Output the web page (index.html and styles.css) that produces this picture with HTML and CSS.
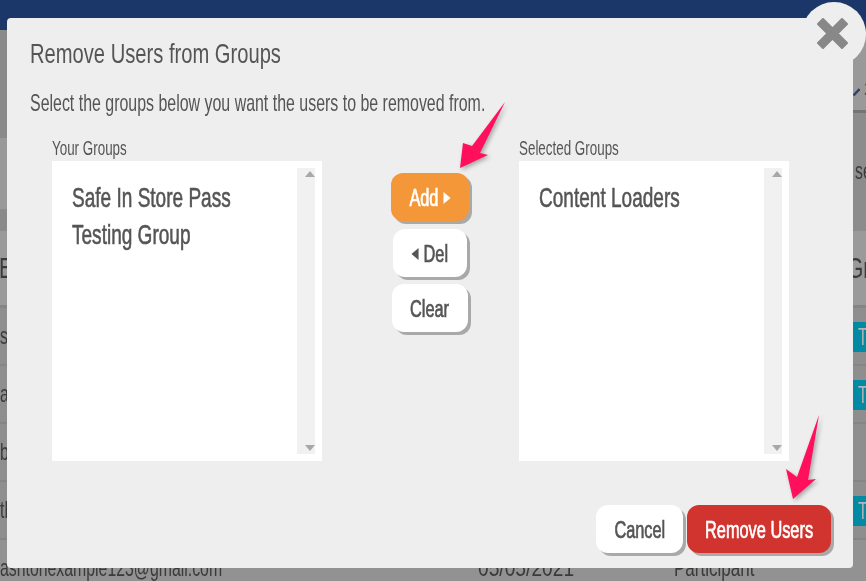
FILE: index.html
```html
<!DOCTYPE html>
<html lang="en">
<head>
<meta charset="utf-8">
<title>Remove Users from Groups</title>
<link rel="stylesheet" href="styles.css">
</head>
<body>
<div class="page">
  <div class="nav"></div>
  <div class="top">
    <div class="edge-l">
      <div class="l-a"></div>
      <div class="l-b"></div>
      <div class="l-c"></div>
    </div>
    <div class="edge-r">
      <div class="r-a">
        <svg class="pencil" width="7" height="8" viewBox="0 0 7 8"><path d="M0.5 7.5 L6.5 1" stroke="#34406a" stroke-width="2.4"/></svg>
        <span class="cond mark">2</span>
      </div>
      <div class="r-b"><span class="cond cell">se</span></div>
    </div>
  </div>
  <div class="thead"><span class="cond head head-start">E</span><span class="cond head head-end">Gr</span></div>
  <div class="row"><span class="cond cell">s</span><span class="tag"><span class="cond cell">T</span></span></div>
  <div class="row"><span class="cond cell">a</span><span class="tag"><span class="cond cell">T</span></span></div>
  <div class="row"><span class="cond cell">b</span></div>
  <div class="row"><span class="cond cell">th</span><span class="tag"><span class="cond cell">T</span></span></div>
  <div class="last"><span class="cond cell">ashtonexample123@gmail.com</span><span class="cond cell date">05/05/2021</span><span class="cond cell role">Participant</span></div>
</div>

<div class="modal">
  <h1 class="title"><span class="cond t-title">Remove Users from Groups</span></h1>
  <p class="lead"><span class="cond t-lead">Select the groups below you want the users to be removed from.</span></p>
  <div class="picker">
    <div class="col">
      <div class="col-label"><span class="cond t-label">Your Groups</span></div>
      <div class="listbox">
        <ul class="items">
          <li><span class="cond t-item">Safe In Store Pass</span></li>
          <li><span class="cond t-item">Testing Group</span></li>
        </ul>
        <div class="scroll"><i class="up"></i><i class="down"></i></div>
      </div>
    </div>
    <div class="mid">
      <button class="btn orange wide-add"><span class="t-btn">Add<i class="tri-r"></i></span></button>
      <button class="btn white wide-del"><span class="t-btn"><i class="tri-l"></i>Del</span></button>
      <button class="btn white wide-clear"><span class="t-btn">Clear</span></button>
    </div>
    <div class="col">
      <div class="col-label"><span class="cond t-label">Selected Groups</span></div>
      <div class="listbox">
        <ul class="items">
          <li><span class="cond t-item">Content Loaders</span></li>
        </ul>
        <div class="scroll"><i class="up"></i><i class="down"></i></div>
      </div>
    </div>
  </div>
  <div class="actions">
    <button class="btn white cancel"><span class="t-btn">Cancel</span></button>
    <button class="btn red remove"><span class="t-btn">Remove Users</span></button>
  </div>
</div>

<div class="close">
  <svg width="31" height="31" viewBox="0 0 31 31"><polygon points="6,1 15.5,10.5 25,1 30,6 20.5,15.5 30,25 25,30 15.5,20.5 6,30 1,25 10.5,15.5 1,6" fill="#888" stroke="#888" stroke-width="2" stroke-linejoin="round"/></svg>
</div>

<svg class="arrows" width="866" height="581" viewBox="0 0 866 581">
  <polygon points="505,102 472,146 463,143 460,168 488,155 480,153" fill="#ff0f5c"/>
  <polygon points="819,415 797,477 786,469 793,499 816,479 808,480" fill="#ff0f5c"/>
</svg>
</body>
</html>
```
FILE: styles.css
```css
* { box-sizing: border-box; }
html, body { margin: 0; height: 581px; overflow: hidden; }
body { position: relative; width: 866px; background: #929292; font-family: "Liberation Sans", Arial, sans-serif; color: #555; }

.cond { display: inline-block; white-space: nowrap; transform-origin: left center; }

.page { height: 581px; display: flex; flex-direction: column; color: #3a3a3a; overflow: hidden; }
.nav { height: 30px; background: #1b3668; flex: none; }
.top { height: 201px; display: flex; justify-content: space-between; flex: none; background: #8c8c8c; }
.edge-l { width: 7px; display: flex; flex-direction: column; }
.l-a { height: 108px; background: #8a8a8a; }
.l-b { height: 71px; background: #999; }
.l-c { height: 22px; background: #8a8a8a; }
.edge-r { width: 13px; display: flex; flex-direction: column; overflow: hidden; }
.r-a { height: 83px; background: #999; border-bottom: 3px solid #747474; display: flex; align-items: flex-end; gap: 4px; padding-bottom: 14px; }
.pencil { flex: none; }
.mark { font-size: 18px; line-height: 14px; color: #5a4630; }
.r-b { flex: 1; background: #8c8c8c; padding: 43px 0 0 2px; }

.cell { font-size: 24px; line-height: 30px; transform: scaleX(.66); }
.date { transform: scaleX(.8); }
.role { transform: scaleX(.71); }
.head { font-size: 30px; line-height: 36px; transform: scaleX(.7); }
.head-start { margin-left: -1px; }
.head-end { margin-right: -1px; width: 20px; }
.thead { height: 77px; background: #9a9a9a; border-bottom: 3px solid #858585; display: flex; justify-content: space-between; align-items: center; flex: none; overflow: hidden; }
.row { height: 58px; border-bottom: 2px solid #858585; background: #8e8e8e; display: flex; justify-content: space-between; align-items: center; flex: none; overflow: hidden; }
.tag { background: #008aa3; color: #b5b5b5; width: 13px; height: 30px; margin-top: 2px; padding-left: 5px; overflow: hidden; display: flex; align-items: center; }
.last { flex: 1; display: grid; grid-template-columns: 478px 196px 1fr; padding-top: 13px; background: #929292; }

.modal { position: absolute; left: 7px; top: 18px; width: 846px; height: 550px; background: #eee; border-radius: 4px; padding: 16px 22px 0 23px; }
.title { margin: 0; font-weight: 400; font-size: 28px; line-height: 40px; color: #555; }
.t-title { transform: scaleX(.72); }
.lead { margin: 15px 0 0; font-size: 24px; line-height: 28px; color: #555; }
.t-lead { transform: scaleX(.664); }
.picker { display: flex; margin: 18px 0 0 22px; }
.col { width: 270px; flex: none; }
.col-label { font-size: 20px; line-height: 26px; color: #555; }
.t-label { transform: scaleX(.67); }
.listbox { height: 300px; background: #fff; display: flex; justify-content: space-between; padding: 7px 7px 7px 0; }
.items { list-style: none; margin: 0; padding: 11px 0 0 20px; font-size: 28px; line-height: 37px; color: #555; overflow: hidden; }
.t-item { transform: scaleX(.68); -webkit-text-stroke: .6px #555; }
.scroll { width: 18px; flex: none; background: #f1f1f1; display: flex; flex-direction: column; justify-content: space-between; align-items: flex-end; padding: 3px 0; }
.up { border: 5.5px solid transparent; border-top: 0; border-bottom: 6px solid #a8a8a8; }
.down { border: 5.5px solid transparent; border-bottom: 0; border-top: 6px solid #a8a8a8; }

.mid { width: 197px; flex: none; display: flex; flex-direction: column; align-items: center; padding: 38px 0 0 18px; }
.btn { display: flex; align-items: center; justify-content: center; height: 48px; border: 0; border-radius: 12px; box-shadow: 3px 3px 0 #a9a9a9; font-family: inherit; font-size: 23px; padding: 0; white-space: nowrap; }
.t-btn { display: inline-flex; align-items: center; flex: none; margin-top: 2px; transform: scaleX(.71); -webkit-text-stroke: .7px currentColor; }
.orange { background: #f49738; color: #fff; }
.white { background: #fff; color: #555; }
.red { background: #d1332e; color: #fff; }
.wide-add { width: 78px; }
.wide-del { width: 74px; margin-top: 8px; }
.wide-clear { width: 76px; margin-top: 7px; }
.tri-r, .tri-l { display: block; border: 6.5px solid transparent; }
.tri-r { border-right: 0; border-left: 10px solid #fff; margin-left: 7px; }
.tri-l { border-left: 0; border-right: 10px solid #555; margin-right: 7px; }

.actions { display: flex; justify-content: flex-end; gap: 4px; margin-top: 44px; }
.cancel { width: 87px; }
.remove { width: 144px; }

.close { position: absolute; left: 802px; top: 2px; width: 64px; height: 64px; border-radius: 50%; background: #eee; display: flex; align-items: center; justify-content: center; }
.close svg { margin: 0 3px 2px 0; }
.arrows { position: absolute; left: 0; top: 0; pointer-events: none; filter: drop-shadow(2px 2px 2px rgba(0,0,0,.3)); }
```
